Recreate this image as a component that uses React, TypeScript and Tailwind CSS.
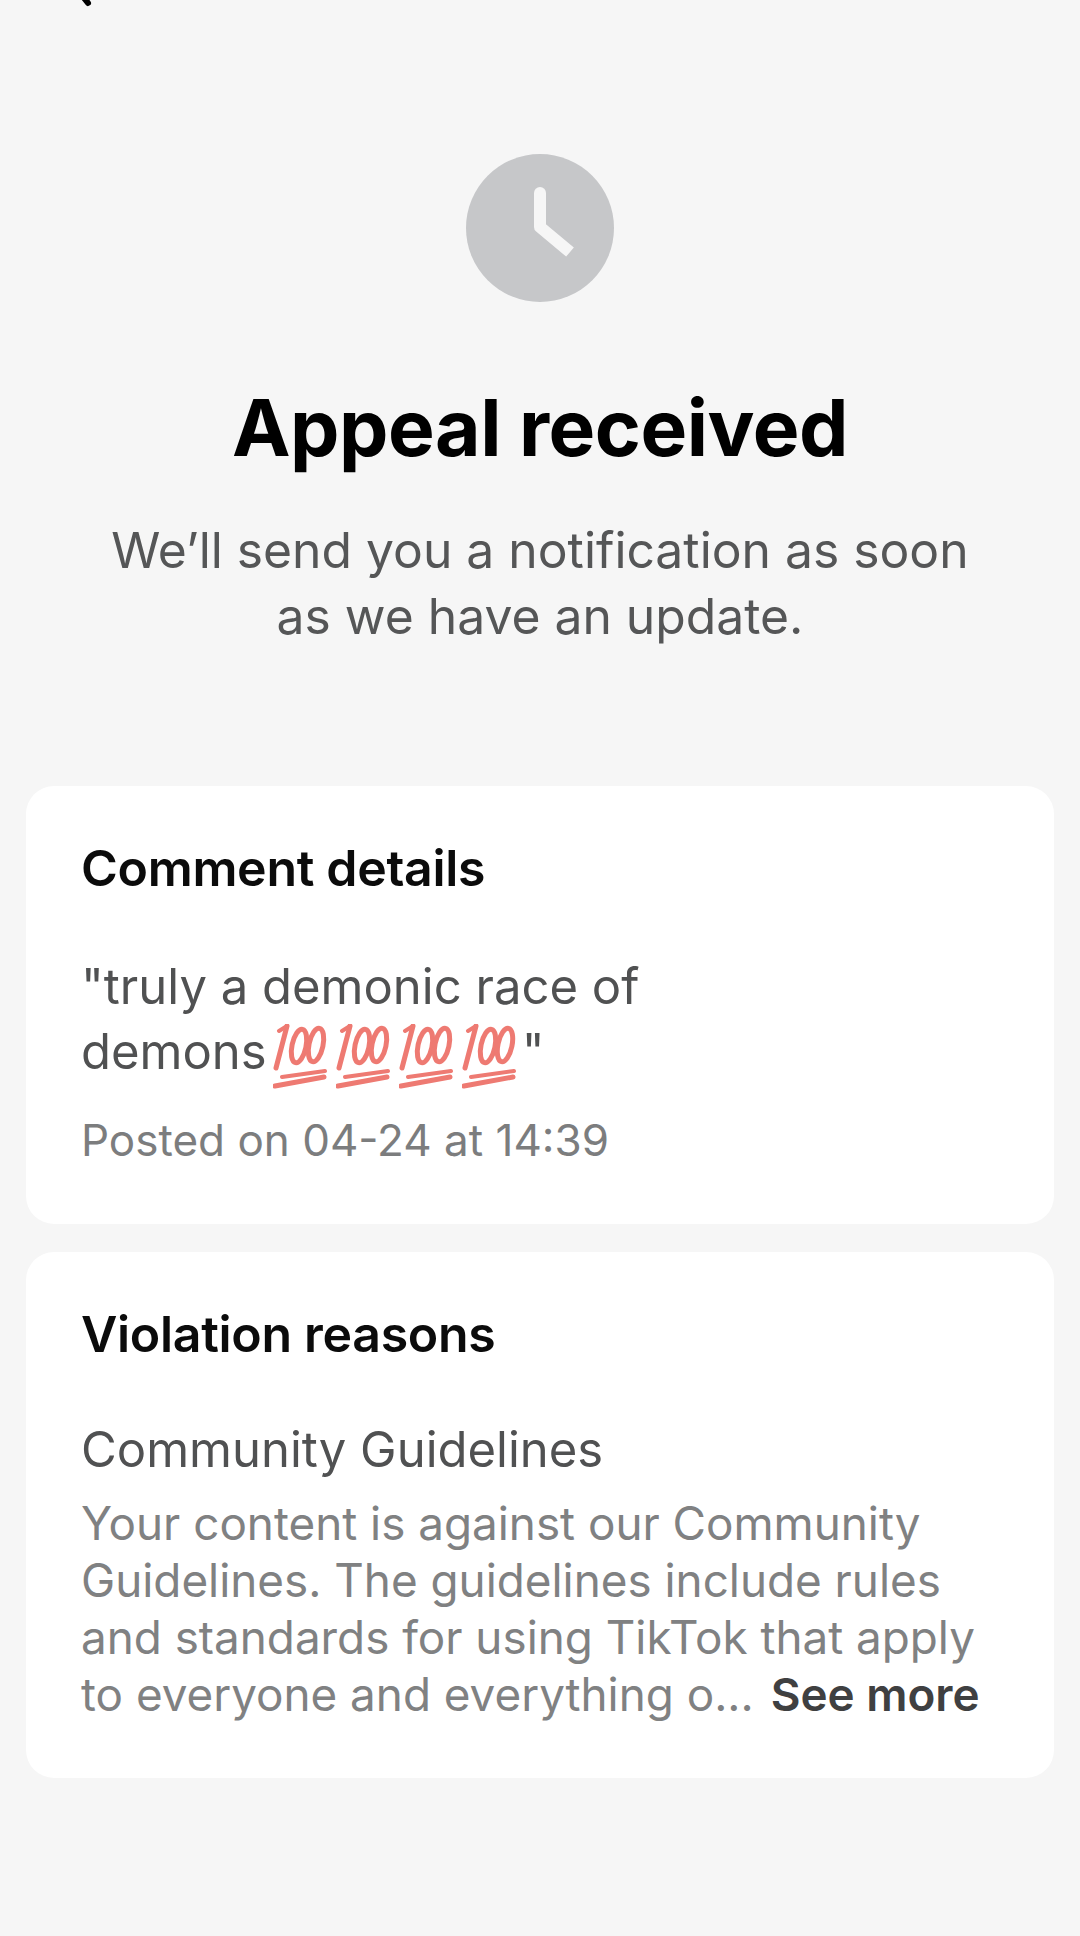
const font = { fontFamily: 'Inter, "Liberation Sans", sans-serif' };

// the 💯 emoji, there is no colour emoji font here so it is drawn
function Hundred() {
  return (
    <svg width="54" height="65" viewBox="0 0 54 65" fill="none" stroke="#ee7a72" strokeLinecap="round" className="shrink-0" role="img" aria-label="100">
      <path d="M14 2 L3 44" strokeWidth="5" />
      <path d="M14 2 L6 7" strokeWidth="4" />
      <ellipse cx="26" cy="22" rx="7" ry="17" strokeWidth="5" transform="rotate(12 26 22)" />
      <ellipse cx="43" cy="21" rx="7" ry="17" strokeWidth="5" transform="rotate(12 43 21)" />
      <path d="M9 53 L52 47" strokeWidth="4" />
      <path d="M2 62 L51 53" strokeWidth="5" />
    </svg>
  );
}

function Card({ title, className, children }: { title: string; className: string; children: React.ReactNode }) {
  return (
    <section className={`bg-white rounded-[28px] px-[55px] ${className}`}>
      <h2 className="text-[50px] leading-[56px] font-semibold text-[#0b0b0b] tracking-[-0.3px]">{title}</h2>
      {children}
    </section>
  );
}

export default function App() {
  return (
    <div style={font} className="w-[1080px] h-[1936px] overflow-hidden bg-[#f6f6f6]">
      <svg width="30" height="10" viewBox="0 0 30 10" fill="none" className="block ml-[70px]">
        <path d="M11 -6 L18 3" stroke="#000" strokeWidth="6" strokeLinecap="round" />
      </svg>

      <div className="flex justify-center mt-[144px]">
        <div className="w-[148px] h-[148px] rounded-full bg-[#c6c7c9] flex items-center justify-center">
          <svg width="148" height="148" viewBox="0 0 148 148" fill="none">
            <path d="M74 40 V73 L104 98" stroke="#f6f6f6" strokeWidth="12" strokeLinejoin="round" />
            <path d="M74 39 V42" stroke="#f6f6f6" strokeWidth="12" strokeLinecap="round" />
          </svg>
        </div>
      </div>

      <h1 className="mt-[82px] text-center text-[78.5px] leading-[88px] font-bold text-black tracking-[-0.5px]">Appeal received</h1>

      <p className="mt-[45px] text-center text-[49.8px] leading-[66px] text-[#555657]">
        We’ll send you a notification as soon
        <br />
        as we have an update.
      </p>

      <div className="mt-[137px] mx-[26px] flex flex-col gap-[28px]">
        <Card title="Comment details" className="h-[438px] pt-[54px]">
          <div className="mt-[58px] text-[49px] leading-[65px] text-[#505152]">
            <div>"truly a demonic race of</div>
            <div className="flex items-center h-[65px]">
              <span>demons</span>
              <span className="flex ml-[6px] gap-[9px] mt-[10px]">
                <Hundred />
                <Hundred />
                <Hundred />
                <Hundred />
              </span>
              <span className="ml-[6px]">"</span>
            </div>
          </div>
          <div className="mt-[29px] text-[44px] leading-[54px] text-[#7c7d7e]">Posted on 04-24 at 14:39</div>
        </Card>

        <Card title="Violation reasons" className="h-[526px] pt-[54px]">
          <div className="mt-[59px] text-[49px] leading-[58px] text-[#505152]">Community Guidelines</div>
          <p className="mt-[16px] text-[45.8px] leading-[57px] text-[#808182] whitespace-nowrap">
            Your content is against our Community
            <br />
            Guidelines. The guidelines include rules
            <br />
            and standards for using TikTok that apply
            <br />
            to everyone and everything o...{' '}
            <span className="ml-[4px] font-semibold text-[#3f4041]">See more</span>
          </p>
        </Card>
      </div>
    </div>
  );
}
